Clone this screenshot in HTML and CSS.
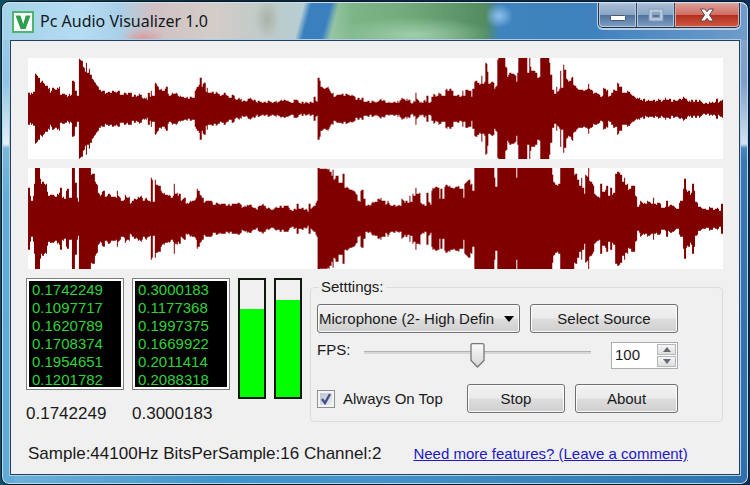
FILE: index.html
```
<!DOCTYPE html>
<html lang="en">
<head>
<meta charset="utf-8">
<title>Pc Audio Visualizer 1.0</title>
<link rel="stylesheet" href="styles.css">
</head>
<body>
<div class="window">
  <header class="titlebar">
    <svg class="app-icon" viewBox="0 0 22 22" aria-hidden="true">
      <rect x="1" y="1" width="20" height="20" fill="#fff" stroke="#4fb56c" stroke-width="2"/>
      <path d="M3.500 4.500h5l2.700 8.500 2.600-8.500h4.700L13.600 18H8.600z" fill="#2f9e50"/>
    </svg>
    <h1 class="title">Pc Audio Visualizer 1.0</h1>
    <div class="caption">
      <button class="cap" type="button" aria-label="Minimize">
        <svg viewBox="0 0 18 14" width="18" height="14"><rect x="1.500" y="7.500" width="15" height="5" rx="1" fill="#fff" stroke="#4a566a"/></svg>
      </button>
      <button class="cap" type="button" aria-label="Maximize" disabled>
        <svg viewBox="0 0 18 14" width="18" height="14"><path d="M2 1h14v12H2zM5.500 4.500v5h7v-5z" fill="#b4c6da" fill-rule="evenodd" stroke="#8199b4" stroke-width=".8"/></svg>
      </button>
      <button class="cap cap-close" type="button" aria-label="Close">
        <svg viewBox="0 0 18 14" width="18" height="14"><path d="M2.500 1h4.300L9 3.700 11.200 1h4.300l-4 6 4 6h-4.300L9 10.300 6.800 13H2.500l4-6z" fill="#fff" stroke="#63424a"/></svg>
      </button>
    </div>
  </header>

  <main class="client">
    <section class="waves">
      <svg class="wave" id="wave-left" viewBox="0 0 2088 303" preserveAspectRatio="none" role="img" aria-label="Left channel"></svg>
      <svg class="wave" id="wave-right" viewBox="0 0 2088 303" preserveAspectRatio="none" role="img" aria-label="Right channel"></svg>
    </section>

    <section class="panel">
      <div class="channel">
        <ul class="levels">
          <li>0.1742249</li><li>0.1097717</li><li>0.1620789</li><li>0.1708374</li><li>0.1954651</li><li>0.1201782</li>
        </ul>
        <output class="current">0.1742249</output>
      </div>
      <div class="channel">
        <ul class="levels">
          <li>0.3000183</li><li>0.1177368</li><li>0.1997375</li><li>0.1669922</li><li>0.2011414</li><li>0.2088318</li>
        </ul>
        <output class="current">0.3000183</output>
      </div>
      <div class="meters">
        <div class="meter"><div class="meter-fill" style="height:75%"></div></div>
        <div class="meter"><div class="meter-fill" style="height:83%"></div></div>
      </div>

      <fieldset class="settings">
        <legend>Setttings:</legend>
        <div class="row">
          <div class="combo">
            <select aria-label="Source"><option>Microphone (2- High Defin</option></select>
            <svg class="combo-arrow" viewBox="0 0 10 6" width="10" height="6" aria-hidden="true"><path d="M0 0h10L5 6z"/></svg>
          </div>
          <button class="btn btn-source" type="button">Select Source</button>
        </div>
        <div class="row row-fps">
          <label for="fps">FPS:</label>
          <input class="slider" id="fps" type="range" min="0" max="200" value="100">
          <div class="spin">
            <input type="text" inputmode="numeric" value="100" aria-label="FPS value">
            <div class="spin-buttons">
              <button type="button" aria-label="Increase"><svg viewBox="0 0 8 5" width="8" height="5"><path d="M4 0l4 5H0z"/></svg></button>
              <button type="button" aria-label="Decrease"><svg viewBox="0 0 8 5" width="8" height="5"><path d="M0 0h8L4 5z"/></svg></button>
            </div>
          </div>
        </div>
        <div class="row row-actions">
          <input class="check" id="top" type="checkbox" checked>
          <label class="check-label" for="top">Always On Top</label>
          <button class="btn btn-small" type="button">Stop</button>
          <button class="btn btn-small" type="button">About</button>
        </div>
      </fieldset>
    </section>

    <footer class="status">
      <span class="format">Sample:44100Hz BitsPerSample:16 Channel:2</span>
      <a href="#comment">Need more features? (Leave a comment)</a>
    </footer>
  </main>
</div>
<script src="waves.js"></script>
</body>
</html>
```
FILE: styles.css
```
* { box-sizing: border-box; }

body {
  margin: 0;
  min-height: 100vh;
  display: flex;
  padding: 1px;
  background: linear-gradient(90deg, #0d5264, #08283f 30%, #0a2d58);
  font: 15px/18px "Liberation Sans", Arial, sans-serif;
  color: #1a1a1a;
}

.window {
  flex: 1;
  display: flex;
  flex-direction: column;
  padding: 0 8px 9px;
  border: 1px solid #0b1626;
  border-radius: 8px;
  box-shadow: inset 0 0 0 1px #b5dcef;
  background:
    linear-gradient(180deg, #8aa6cc 0, #7f9fc9 80px, #d4e2f1 142px, #4a86bf 146px, #3a77b4 160px, #2f70ad) right / 12px 100% no-repeat,
    linear-gradient(180deg, #a2d0ea 0, #8ec4e4 80px, #e4f0f8 142px, #7cb8d6 146px, #62acd6 200px, #5fabd8) left / 12px 100% no-repeat,
    linear-gradient(90deg, #6fb2da, #3d94ca 30%, #4393c8 50%, #2b73ae);
}

.titlebar {
  display: flex;
  align-items: flex-start;
  height: 38px;
  margin: 0 -7px;
  padding: 0 7px 0 9px;
  border-radius: 7px 7px 0 0;
  border-top: 1px solid #d3e2e8;
  background:
    radial-gradient(ellipse 14px 12px at 496px 13px, #8fc0ec, transparent),
    radial-gradient(ellipse 22px 10px at 140px 35px, #dc9a9c, transparent),
    radial-gradient(ellipse 12px 20px at 264px 16px, #abb2a8, transparent),
    linear-gradient(105deg, transparent 291px, #3a80be 298px, #3a80be 317px, transparent 325px) 0 0 / 400px 100% no-repeat,
    radial-gradient(ellipse 80px 18px at 410px 32px, #9ecfac, transparent),
    linear-gradient(90deg, #a3d3ea 0, #b5dcf2 80px, #a9d0e8 115px, #d0c1c3 150px, #d3cdc8 210px, #bccac8 270px, #b5cfd8 305px, #94c4a0 330px, #7db587 350px, #74ab7c 400px, #538c60 482px, #3f84bd 496px, #3f82be 590px, #6f9bca 740px);
}

.app-icon { width: 22px; height: 22px; margin-top: 8px; }

.title {
  margin: 7px 0 0 6px;
  font: 16px/22px "Noto Sans", "Open Sans", sans-serif;
  color: #101820;
}

.caption {
  display: flex;
  margin-left: auto;
  border: 1px solid #23324a;
  border-top: 0;
  border-radius: 0 0 5px 5px;
  box-shadow: 0 1px 0 1px #b8cfe5;
}

.cap {
  display: grid;
  place-items: center;
  width: 38px;
  height: 24px;
  padding: 0;
  border: 0;
  border-right: 1px solid #35465f;
  border-radius: 0 0 0 4px;
  box-shadow: inset 0 0 0 1px #b4c7dc;
  background: linear-gradient(180deg, #a9bed6, #8ba6c5 48%, #50739e 52%, #7f9fc4);
}
.cap + .cap { border-radius: 0; }
.cap.cap-close {
  width: 64px;
  border-right: 0;
  border-radius: 0 0 4px 0;
  box-shadow: inset 0 0 0 1px #dfa8a3;
  background: linear-gradient(180deg, #dda199, #cf6e62 48%, #b3301f 52%, #cf5a43);
}

.client {
  flex: 1;
  padding: 17px 16px 10px 17px;
  border: 1px solid #26405c;
  outline: 1px solid #abd0e6;
  background: #f0f0f0;
}

.waves { display: grid; gap: 9px; }
.wave { display: block; width: 100%; height: 101px; background: #fff; }
.wave path { fill: #800000; }

.panel {
  display: flex;
  align-items: flex-start;
  gap: 8px;
  margin: 9px 0 0 -2px;
}

.channel { width: 98px; }
.levels {
  height: 112px;
  margin: 0;
  padding: 2px 0 0 5px;
  list-style: none;
  border: 1px solid #7c7f84;
  outline: 2px solid #fff;
  outline-offset: -3px;
  background: #000;
  color: #2fd23a;
}
.current { display: block; margin-top: 14px; font-size: 17px; line-height: 20px; }

.meters { display: flex; gap: 8px; }
.meter {
  display: flex;
  align-items: flex-end;
  width: 28px;
  height: 121px;
  border: 2px solid #101810;
}
.meter-fill { width: 100%; background: #0f0; }

.settings {
  flex: 1;
  min-width: 0;
  margin: 0;
  padding: 8px 44px 8px 6px;
  border: 1px solid #dcdcdc;
  border-radius: 4px;
}
.settings legend { margin-left: 2px; padding: 0 2px; }

.row { display: flex; align-items: center; gap: 10px; }

.btn, .combo select {
  height: 29px;
  padding: 0;
  border: 1px solid #707070;
  border-radius: 3px;
  box-shadow: inset 0 0 0 1px #fbfbfb;
  background: linear-gradient(180deg, #f2f2f2, #ebebeb 48%, #dddddd 52%, #cfcfcf);
  font: inherit;
  color: inherit;
}
.btn-source { width: 148px; }
.btn-small { width: 98px; }
.btn-small:last-child { width: 103px; }

.combo { position: relative; flex: 1; min-width: 0; }
.combo select {
  display: block;
  width: 100%;
  padding: 0 20px 0 1px;
  appearance: none;
  text-overflow: clip;
}
.combo-arrow { position: absolute; right: 6px; top: 12px; pointer-events: none; }

.row-fps { margin-top: 9px; align-items: flex-start; }
.row-fps label { line-height: 16px; }

.slider {
  flex: 1;
  min-width: 0;
  height: 26px;
  margin: 0 10px 0 4px;
  appearance: none;
  background: linear-gradient(#b0b0b0, #b0b0b0) 0 9px / 100% 1px no-repeat, linear-gradient(#d8d8d8, #d8d8d8) 0 10px / 100% 2px no-repeat;
}
.slider::-webkit-slider-thumb {
  appearance: none;
  width: 15px;
  height: 25px;
  background: url("data:image/svg+xml,%3Csvg xmlns='http://www.w3.org/2000/svg' viewBox='0 0 15 25'%3E%3Cdefs%3E%3ClinearGradient id='g' x2='0' y2='1'%3E%3Cstop stop-color='%23fafafa'/%3E%3Cstop offset='1' stop-color='%23d4d4d4'/%3E%3C/linearGradient%3E%3C/defs%3E%3Cpath d='M2.500 .7h10q1.500 0 1.500 1.500v15.300L7.500 24 1 17.500V2.200Q1 .7 2.500 .7z' fill='url(%23g)' stroke='%23777' stroke-width='1.300'/%3E%3C/svg%3E") no-repeat;
}

.spin {
  display: flex;
  width: 67px;
  height: 27px;
  padding: 1px;
  border: 1px solid #a9abb0;
  background: #fff;
}
.spin input {
  flex: 1;
  min-width: 0;
  padding: 0 0 2px 2px;
  border: 0;
  outline: 0;
  background: none;
  font: inherit;
  color: inherit;
}
.spin-buttons { display: grid; width: 19px; gap: 1px; }
.spin-buttons button {
  display: grid;
  place-items: center;
  padding: 0;
  border: 1px solid #b4b8bd;
  background: linear-gradient(#f6f6f6, #dedede);
}
.spin-buttons path { fill: #666b75; }

.row-actions { margin-top: 15px; }
.check {
  width: 18px;
  height: 18px;
  margin: 0;
  appearance: none;
  border: 1px solid #8e8f8f;
  box-shadow: inset 0 0 0 2px #f4f4f4;
  background:
    url("data:image/svg+xml,%3Csvg xmlns='http://www.w3.org/2000/svg' viewBox='0 0 16 16'%3E%3Cpath d='M4 8l3 4 5-9' fill='none' stroke='%2340508f' stroke-width='2.400'/%3E%3C/svg%3E"),
    linear-gradient(135deg, #b9c0ca, #f0f2f5);
}
.check-label { flex: 1; margin-left: -2px; white-space: nowrap; }

.status {
  display: flex;
  gap: 32px;
  align-items: baseline;
  margin-top: 20px;
  white-space: nowrap;
}
.format { font-size: 17px; line-height: 20px; }
.status a { color: #2218c4; }
```
FILE: waves.js
```
// Envelope key points per channel. x and y are in thirds of a pixel;
// each part has its own x offset, and y is the upper edge of the signal.
const channels = [
  { id: "wave-left", base: 177, top: 25, parts: [
    [-22, "22:128 27:137 38:125 43:72 53:85 57:98 67:100 75:108 84:115 88:128 95:113 105:120 115:112 118:135 130:132 140:140 150:135 154:92 163:122 168:138 174:138 175:28 182:33 188:50 194:65 196:40 200:68 205:58 208:75 213:85 220:95 228:108 236:120 240:126 247:122 252:132 262:127 290:127 293:122 298:135 315:132 330:130 335:140 350:138 360:135 365:145 378:150 383:130 387:142 390:122 395:138 402:140 404:98 410:108 416:120 430:122 436:110 441:132 447:138 458:132 466:130 480:140 495:145 518:145 524:122 530:110 538:85 543:112 550:100 556:125 560:115 563:128 590:130 600:138 615:133 625:145 638:135 645:150 660:147 665:155 690:148 705:155"],
    [668, "27:155 35:160 70:155 80:158 95:152 110:152 120:160 140:150 150:162 170:158 190:140 195:152 200:155 202:85 207:92 210:112 235:118 243:130 255:140 265:135 305:135 315:150 335:145 340:155 380:157 400:150 410:158 445:158 455:145 465:155 475:150 480:158 494:155 495:130 500:148 508:158 525:155 530:138 535:158 545:142 550:133 557:140 565:130 575:138 585:120 605:122 610:138 630:140 636:122 640:138 645:120 655:122 663:140 667:118 672:95 690:102 695:78 698:102 705:40 711:65 716:102"],
    [1388, "0:98 12:120 18:108 22:30 25:22 45:52 52:80 58:68 72:75 78:95 82:68 84:22 112:70 117:24 120:50 125:62 137:68 142:85 150:55 152:22 175:22 177:40 182:75 188:120 192:132 198:110 203:125 210:115 211:62 215:115 220:45 224:60 230:88 240:95 246:80 250:105 258:112 268:120 280:122 294:102 299:118 312:130 325:132 332:140 340:115 348:122 356:140 365:130 376:122 383:98 390:112 396:130 408:130 416:125 425:135 437:145 450:150 470:152 500:153 530:150 560:153 583:144 600:155 630:152 640:162 660:160 675:155 680:147 685:158 692:152 700:152"]
  ] },
  { id: "wave-right", base: 504, top: 352, parts: [
    [-22, "22:410 27:435 32:450 36:435 40:400 43:352 53:352 57:385 60:398 75:400 78:420 84:435 95:432 105:438 115:425 118:412 123:440 135:420 140:415 145:440 154:352 160:352 163:395 168:440 172:452 175:352 207:352 210:372 218:370 222:392 228:402 232:425 240:435 246:420 252:440 265:430 275:438 288:420 293:435 300:450 312:430 320:440 328:460 335:450 355:440 362:435 368:450 378:445 388:452 390:382 396:382 398:452 402:387 407:402 415:405 420:418 432:432 445:432 452:440 460:398 463:430 475:430 480:452 490:440 495:460 510:452 520:450 528:440 530:415 537:430 545:440 550:455 570:448 578:462 600:458 615:465 640:460 658:458 665:470 680:463 700:470"],
    [668, "0:468 15:475 37:460 45:472 65:478 80:470 112:465 118:478 140:458 145:475 168:478 175:458 180:475 190:465 195:455 200:450 202:352 230:355 240:362 243:375 248:358 250:388 258:375 265:395 270:372 272:395 278:370 284:412 300:415 315:430 322:450 330:420 334:418 340:445 346:465 360:463 370:455 385:445 400:450 405:465 412:450 420:465 440:465 455:445 462:455 475:455 478:435 482:452 486:430 490:435 495:412 500:430 510:455 523:465 530:425 534:450 540:462 543:420 555:408 563:412 567:445 570:415 576:415 578:445 582:410 590:402 600:412 620:408 635:415 640:440 643:400 655:388 660:402 668:420 672:352"],
    [1388, "0:352 13:382 17:408 22:352 76:352 78:380 83:352 183:352 186:372 190:392 197:402 205:400 211:380 212:352 250:352 252:372 262:388 268:405 275:380 278:412 284:430 286:372 292:378 295:352 298:390 306:400 313:430 320:435 328:442 332:400 338:422 350:405 356:435 362:410 366:432 375:430 377:370 385:362 392:372 398:392 403:380 405:402 415:418 428:405 435:435 442:468 450:448 460:458 475:452 487:460 490:440 494:460 510:458 515:472 530:450 535:468 545:462 560:475 567:458 575:450 580:415 583:385 588:418 596:420 600:432 606:398 612:420 616:452 625:468 650:478 660:470 690:480 695:460 700:460"]
  ] }
];

const STEP = 3;
const ripple = [0, 3, -2, 4, 1, -3, 2, 5, -1, 3, -4, 2, 0];

for (const { id, base, top, parts } of channels) {
  const points = parts.flatMap(([offset, text]) =>
    text.split(" ").map((pair) => {
      const [x, y] = pair.split(":").map(Number);
      return [x + offset, base - y];
    }));

  let k = 0;
  let bars = "";
  for (let x = 0, n = 0; x < 2088; x += STEP, n++) {
    while (k < points.length - 1 && points[k + 1][0] <= x + 1) k++;
    const [x0, h0] = points[k];
    const [x1, h1] = points[Math.min(k + 1, points.length - 1)];
    let h = h0;
    if (x1 - x0 > 5 && Math.abs(h1 - h0) < 16) h += (h1 - h0) * Math.max(0, x - x0) / (x1 - x0);
    if (x - x0 > 3 && h < base - top - 4) h += ripple[(n >> 1) % ripple.length];
    h = Math.min(base - top, Math.round(h / 3) * 3);
    bars += `M${x} ${152 - h}h${STEP}v${2 * h}h-${STEP}z`;
  }
  const path = document.createElementNS("http://www.w3.org/2000/svg", "path");
  path.setAttribute("d", bars);
  document.getElementById(id).append(path);
}
```
